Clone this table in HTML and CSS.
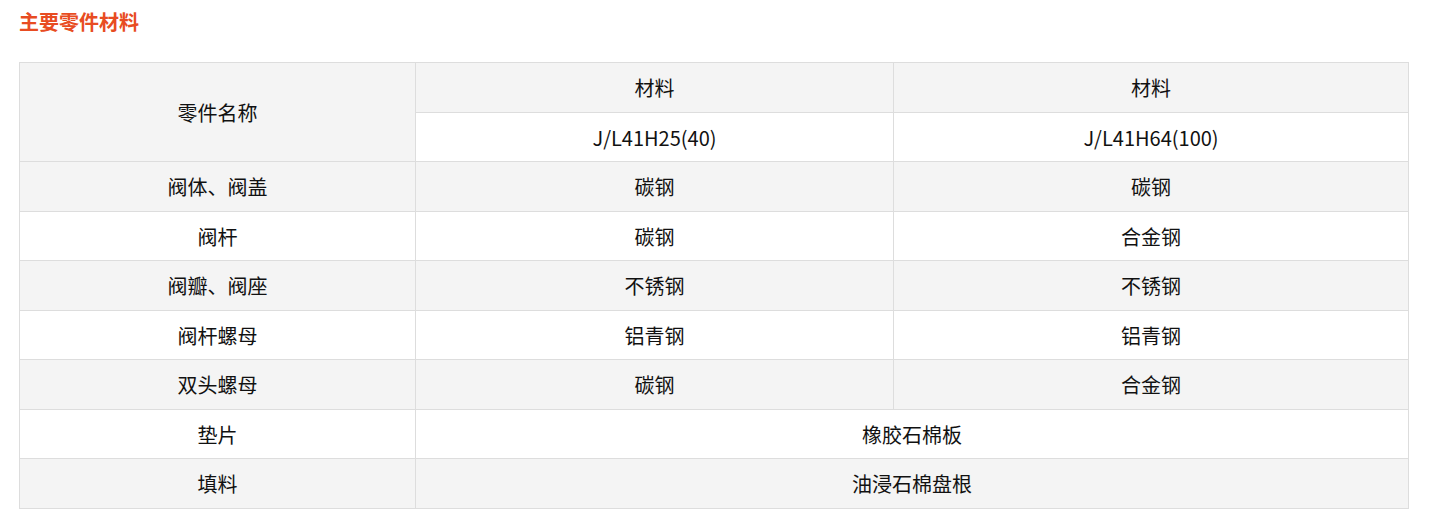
FILE: index.html
```html
<!DOCTYPE html>
<html lang="zh-CN">
<head>
<meta charset="utf-8">
<title>主要零件材料</title>
<link rel="stylesheet" href="styles.css">
</head>
<body>
<div class="page">
  <h3 class="title">主要零件材料</h3>
  <table class="spec">
    <colgroup>
      <col class="c1">
      <col class="c2">
      <col class="c3">
    </colgroup>
    <tbody>
      <tr><td rowspan="2">零件名称</td><td>材料</td><td>材料</td></tr>
      <tr><td>J/L41H25(40)</td><td>J/L41H64(100)</td></tr>
      <tr><td>阀体、阀盖</td><td>碳钢</td><td>碳钢</td></tr>
      <tr><td>阀杆</td><td>碳钢</td><td>合金钢</td></tr>
      <tr><td>阀瓣、阀座</td><td>不锈钢</td><td>不锈钢</td></tr>
      <tr><td>阀杆螺母</td><td>铝青钢</td><td>铝青钢</td></tr>
      <tr><td>双头螺母</td><td>碳钢</td><td>合金钢</td></tr>
      <tr><td>垫片</td><td colspan="2">橡胶石棉板</td></tr>
      <tr><td>填料</td><td colspan="2">油浸石棉盘根</td></tr>
    </tbody>
  </table>
</div>
</body>
</html>
```

FILE: styles.css
```css
html, body {
  margin: 0;
  padding: 0;
  background: #fff;
}
.page {
  padding: 7px 0 0 19px;
  font-family: "Noto Sans CJK SC", sans-serif;
  color: #111111;
}
.title {
  margin: 0 0 25px 0;
  font-size: 20px;
  line-height: 30px;
  font-weight: bold;
  color: #e84c22;
}
.spec {
  width: 1389px;
  border-collapse: collapse;
  table-layout: fixed;
  font-size: 20px;
}
.c1 { width: 396px; }
.c2 { width: 478px; }
.c3 { width: 515px; }
.spec td {
  border: 1px solid #dddddd;
  text-align: center;
  vertical-align: middle;
  height: 49.5px;
  padding: 2px 0 0 0;
  box-sizing: border-box;
  line-height: 24px;
}
.spec tr:nth-child(odd) td {
  background: #f4f4f4;
}
.spec tr:nth-child(even) td {
  background: #ffffff;
}
```
